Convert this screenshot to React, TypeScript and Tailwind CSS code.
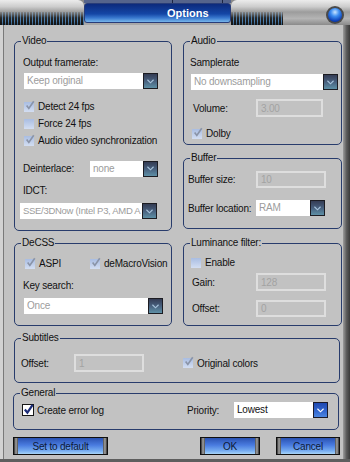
import React from 'react';

const font = "font-['Liberation_Sans',Arial,sans-serif]";

const Check: React.FC<{ checked?: boolean; strong?: boolean }> = ({ checked, strong }) => {
  if (strong) {
    return (
      <div className="relative w-[12px] h-[12px] shrink-0 border border-[#161616] bg-white">
        <svg viewBox="0 0 12 12" className="absolute left-[0px] top-[-1px] w-[11px] h-[11px]">
          <path d="M2 6 L4.8 9.5 L10.5 1" fill="none" stroke="#1c2c78" strokeWidth="2.4" />
        </svg>
      </div>
    );
  }
  return (
    <div className="relative w-[10px] h-[10px] shrink-0 bg-[linear-gradient(180deg,#a9bde2,#d3def2)]">
      {checked && (
        <svg viewBox="0 0 12 12" className="absolute left-[1px] top-[-2px] w-[10px] h-[11px]">
          <path d="M2 6 L4.6 9.5 L10.5 1" fill="none" stroke="#8a94a8" strokeWidth="2" />
        </svg>
      )}
    </div>
  );
};

const Arrow: React.FC<{ active?: boolean }> = ({ active }) => (
  <div
    className={
      active
        ? 'w-[15px] h-full shrink-0 border border-[#1a1a2a] bg-[linear-gradient(180deg,#1e48b0,#3468d0_60%,#4c86e0)] flex items-center justify-center'
        : 'w-[15px] h-full shrink-0 border border-[#1c1c22] bg-[linear-gradient(180deg,#343c54,#48607e_50%,#5e90a6)] flex items-center justify-center'
    }
  >
    <svg viewBox="0 0 8 5" className="w-[7px] h-[5px]">
      <path d="M0.5 0.5 L4 4 L7.5 0.5" fill="none" stroke={active ? '#ffffff' : '#a8c4dc'} strokeWidth="1.3" />
    </svg>
  </div>
);

const Select: React.FC<{ value: string; className: string; active?: boolean; textClass?: string }> = ({
  value,
  className,
  active,
  textClass = '',
}) => (
  <div className={`flex bg-white h-[16px] ${className}`}>
    <div
      className={`flex-1 overflow-hidden whitespace-nowrap pl-[3px] leading-[16px] ${textClass} ${
        active ? 'text-[#111111]' : 'text-[#9c9c9c]'
      }`}
    >
      {value}
    </div>
    <Arrow active={active} />
  </div>
);

const Field: React.FC<{ value: string; className: string }> = ({ value, className }) => (
  <div className={`border-2 border-[#dedede] text-[#a2a2a2] pl-[3px] flex items-center ${className}`}>{value}</div>
);

const Group: React.FC<{ title: string; className: string; children: React.ReactNode }> = ({
  title,
  className,
  children,
}) => (
  <fieldset className={`border border-[#283c6c] rounded-[5px] ${className}`}>
    <legend className="ml-[6px] px-[1px] leading-[12px] text-[#111111]">{title}</legend>
    {children}
  </fieldset>
);

const CheckRow: React.FC<{ label: string; checked?: boolean; className?: string }> = ({
  label,
  checked,
  className = '',
}) => (
  <div className={`flex items-center h-[17px] gap-[4px] ${className}`}>
    <Check checked={checked} />
    <span className="whitespace-nowrap">{label}</span>
  </div>
);

const Button: React.FC<{ label: string; className: string }> = ({ label, className }) => (
  <div className={`flex h-[18px] border border-[#101010] ${className}`}>
    <div className="w-[4px] bg-[linear-gradient(90deg,#2e2e2e,#a4a4a4,#4c4c4c)]" />
    <div className="flex-1 flex items-center justify-center text-[#0e1a36] bg-[linear-gradient(180deg,#2a52b2,#4a7ce0_45%,#76acf0_80%,#a6d4f8)]">
      {label}
    </div>
    <div className="w-[4px] bg-[linear-gradient(90deg,#4c4c4c,#a4a4a4,#2e2e2e)]" />
  </div>
);

const ridge =
  'bg-[linear-gradient(180deg,rgba(170,170,170,0.75),rgba(90,90,90,0.2)_45%,rgba(0,0,0,0)_70%,rgba(0,0,0,0.35)),repeating-linear-gradient(90deg,#1c1c1c_0px,#1c1c1c_2px,#4c82b4_2px,#4c82b4_3px)]';

const App: React.FC = () => {
  return (
    <div
      className={`${font} text-[10px] tracking-[-0.2px] text-[#111111] w-[350px] h-[462px] bg-[#c2c2c2] flex flex-col overflow-hidden`}
    >
      {/* title bar */}
      <div className="relative flex h-[25px] bg-[#8a8a8a]">
        <div className="w-[84px] flex flex-col">
          <div className="h-[12px] rounded-tr-[6px] bg-[linear-gradient(180deg,#ececec,#cdcdcd_55%,#9c9c9c)]" />
          <div className={`h-[13px] ${ridge}`} />
        </div>
        <div className="w-[147px] flex flex-col bg-[#9a9a9a]">
          <div className="h-[3px] bg-[#55648c] flex">
            <div className="w-[88px]" />
            <div className="w-[1px] bg-[#1c2440]" />
            <div className="flex-1" />
            <div className="w-[1px] bg-[#1c2440]" />
            <div className="w-[8px]" />
          </div>
          <div className="h-[20px] rounded-[3px] border border-[#283c78] bg-[linear-gradient(180deg,#0c2a7c,#1446a6_55%,#3a7ad0_78%,#78b6ea)] flex items-center pl-[82px] text-white font-bold text-[11px] tracking-normal">
            Options
          </div>
          <div className="h-[2px] bg-[#a8a8a8]" />
        </div>
        <div className="flex-1 flex flex-col">
          <div className="h-[12px] rounded-tl-[6px] bg-[linear-gradient(180deg,#ececec,#cdcdcd_55%,#9c9c9c)]" />
          <div className="h-[13px] flex">
            <div className={`w-[52px] ${ridge}`} />
            <div className="flex-1 bg-[linear-gradient(180deg,#9c9c9c,#b4b4b4_50%,#8a8a8a)]" />
          </div>
        </div>
        <div className="absolute left-[326px] top-[6px] w-[18px] h-[18px] rounded-full bg-[#4a4a4a] p-[2px]">
          <div className="w-full h-full rounded-full bg-[radial-gradient(circle_at_50%_30%,#c8e4ff_0%,#3c8cf0_35%,#0a3cb4_75%,#062070_100%)]" />
        </div>
      </div>

      {/* body */}
      <div className="flex flex-1">
        <div className="w-[3px] bg-[#d2d2d2]" />
        <div className="w-[1px] bg-[#7a7a7a]" />
        <div className="flex-1 flex flex-col pt-[10px] pl-[10px]">
          <div className="flex gap-[11px]">
            {/* left column */}
            <div className="flex flex-col w-[158px]">
              <Group title="Video" className="h-[196px]">
                <div className="mt-[10px] ml-[8px] leading-[12px]">Output framerate:</div>
                <Select value="Keep original" className="mt-[4px] ml-[9px] w-[134px]" />
                <div className="mt-[9px] ml-[9px]">
                  <CheckRow label="Detect 24 fps" checked />
                  <CheckRow label="Force 24 fps" />
                  <CheckRow label="Audio video synchronization" checked />
                </div>
                <div className="mt-[11px] flex items-center h-[17px]">
                  <div className="ml-[8px] w-[67px]">Deinterlace:</div>
                  <Select value="none" className="w-[68px]" />
                </div>
                <div className="mt-[8px] ml-[8px] leading-[12px]">IDCT:</div>
                <Select
                  value="SSE/3DNow (Intel P3, AMD A"
                  textClass="text-[9.5px] tracking-[-0.3px]"
                  className="mt-[6px] ml-[5px] w-[137px]"
                />
              </Group>
              <Group title="DeCSS" className="h-[89px] mt-[6px]">
                <div className="mt-[6px] ml-[10px] flex">
                  <CheckRow label="ASPI" checked className="w-[65px]" />
                  <CheckRow label="deMacroVision" checked />
                </div>
                <div className="mt-[8px] ml-[8px] leading-[12px]">Key search:</div>
                <Select value="Once" className="mt-[6px] ml-[9px] w-[139px]" />
              </Group>
            </div>

            {/* right column */}
            <div className="flex flex-col w-[159px]">
              <Group title="Audio" className="h-[110px]">
                <div className="mt-[10px] ml-[6px] leading-[12px]">Samplerate</div>
                <Select value="No downsampling" className="mt-[5px] ml-[7px] w-[147px]" />
                <div className="mt-[9px] flex items-center h-[18px]">
                  <div className="ml-[9px] w-[63px]">Volume:</div>
                  <Field value="3.00" className="w-[67px] h-[18px]" />
                </div>
                <CheckRow label="Dolby" checked className="mt-[8px] ml-[8px]" />
              </Group>
              <Group title="Buffer" className="h-[77px] mt-[7px]">
                <div className="mt-[7px] flex items-center h-[17px]">
                  <div className="ml-[4px] w-[68px] whitespace-nowrap">Buffer size:</div>
                  <Field value="10" className="w-[70px] h-[17px]" />
                </div>
                <div className="mt-[12px] flex items-center h-[16px]">
                  <div className="ml-[4px] w-[68px] whitespace-nowrap shrink-0">Buffer location:</div>
                  <Select value="RAM" className="w-[69px]" />
                </div>
              </Group>
              <Group title="Luminance filter:" className="h-[89px] mt-[8px]">
                <CheckRow label="Enable" className="mt-[5px] ml-[7px]" />
                <div className="mt-[2px] flex items-center h-[18px]">
                  <div className="ml-[8px] w-[64px]">Gain:</div>
                  <Field value="128" className="w-[70px] h-[18px]" />
                </div>
                <div className="mt-[9px] flex items-center h-[17px]">
                  <div className="ml-[8px] w-[64px]">Offset:</div>
                  <Field value="0" className="w-[70px] h-[17px]" />
                </div>
              </Group>
            </div>
          </div>

          <Group title="Subtitles" className="h-[51px] mt-[6px] w-[326px]">
            <div className="mt-[10px] flex items-center h-[18px]">
              <div className="ml-[6px] w-[53px]">Offset:</div>
              <Field value="1" className="w-[70px] h-[18px]" />
              <CheckRow label="Original colors" checked className="ml-[39px]" />
            </div>
          </Group>

          <Group title="General" className="h-[43px] mt-[4px] w-[326px] -ml-[1px]">
            <div className="mt-[3px] flex items-center h-[16px]">
              <div className="ml-[8px] w-[165px] flex items-center gap-[3px]">
                <Check strong />
                <span>Create error log</span>
              </div>
              <div className="w-[47px]">Priority:</div>
              <Select value="Lowest" active className="w-[94px]" />
            </div>
          </Group>

          <div className="mt-[7px] flex">
            <Button label="Set to default" className="w-[95px] -ml-[1px]" />
            <Button label="OK" className="w-[60px] ml-[92px]" />
            <Button label="Cancel" className="w-[64px] ml-[16px]" />
          </div>
        </div>
        <div className="w-[7px] bg-[linear-gradient(90deg,#9c9c9c,#5c5c5c,#3a3a3a)]" />
      </div>
      <div className="h-[3px] bg-[#5e5e5e]" />
    </div>
  );
};

export default App;
